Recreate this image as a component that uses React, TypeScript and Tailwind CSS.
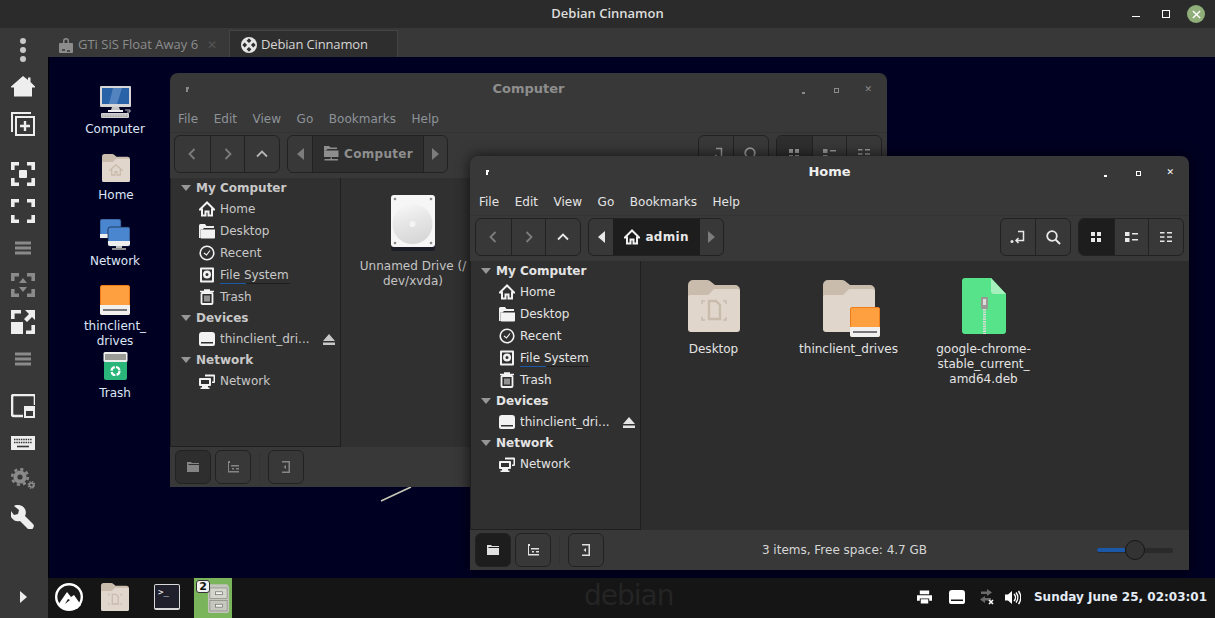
import type { ReactNode } from 'react'

function Folder({ children, className }: { children?: ReactNode; className?: string }) {
  return (
    <svg viewBox="0 0 52 52" className={className}>
      <path d="M0 5a5 5 0 0 1 5-5h14a5 5 0 0 1 3 1l5 4h20a5 5 0 0 1 5 5v20H0z" fill="#c9bcad" />
      <path d="M0 17a2 2 0 0 1 2-2h18l6-6h23a3 3 0 0 1 3 3v37a3 3 0 0 1-3 3H3a3 3 0 0 1-3-3z" fill="#e0d6cb" />
      {children}
    </svg>
  )
}

function DesktopGlyph() {
  return (
    <g fill="none" stroke="#c9bcad">
      <path d="M14 24v-3h3M35 21h3v3M38 37v3h-3M17 40h-3v-3" strokeWidth="1.5" />
      <path d="M21 21h7l4 4v14H21z" strokeWidth="2.4" />
    </g>
  )
}

function HomeGlyph() {
  return <path d="M26 20l-11 10h3v9h6v-6h4v6h6v-9h3z" fill="none" stroke="#c9bcad" strokeWidth="2.4" />
}

function OrangeDrive({ className }: { className?: string }) {
  return (
    <svg viewBox="0 0 30 30" className={className}>
      <rect x="0.5" y="0.5" width="29" height="29" rx="1.5" fill="#ffa040" stroke="#ef7d1a" />
      <path d="M0 20h30v8a2 2 0 0 1-2 2H2a2 2 0 0 1-2-2z" fill="#f2f0ee" />
      <rect x="3" y="24" width="24" height="2" fill="#77767b" />
    </svg>
  )
}

function ZipFile({ className }: { className?: string }) {
  return (
    <svg viewBox="0 0 44 56" className={className}>
      <path d="M3 0h26l15 16v37a3 3 0 0 1-3 3H3a3 3 0 0 1-3-3V3a3 3 0 0 1 3-3z" fill="#57e389" />
      <path d="M29 0l15 16H32a3 3 0 0 1-3-3z" fill="#a6f0bd" />
      <rect x="19" y="19" width="7" height="12" rx="1" fill="#9a9996" />
      <rect x="21" y="21" width="3" height="6" fill="#deddda" />
      <path d="M22.5 31v25" stroke="#deddda" strokeWidth="3" strokeDasharray="1.4 1" />
    </svg>
  )
}

function HardDisk({ className }: { className?: string }) {
  return (
    <svg viewBox="0 0 44 56" className={className}>
      <defs>
        <linearGradient id="platter" x1="0.3" y1="0" x2="0.6" y2="1">
          <stop offset="0" stopColor="#f6f6f6" />
          <stop offset="0.45" stopColor="#e6e6e6" />
          <stop offset="1" stopColor="#d6d6d6" />
        </linearGradient>
      </defs>
      <rect x="0" y="3" width="44" height="53" rx="3" fill="#1c1c28" />
      <rect x="0" y="0" width="44" height="52" rx="3" fill="#f6f6f6" />
      <circle cx="21.500" cy="29" r="20" fill="url(#platter)" />
      <circle cx="21.500" cy="29" r="3" fill="#f4f4f4" />
      <g fill="#8a8a8a">
        <circle cx="4" cy="4" r="1.3" />
        <circle cx="40" cy="4" r="1.3" />
        <circle cx="4" cy="48" r="1.3" />
        <circle cx="40" cy="48" r="1.3" />
      </g>
    </svg>
  )
}

function ComputerIcon({ className }: { className?: string }) {
  return (
    <svg viewBox="0 0 33 33" className={className}>
      <rect x="1" y="0" width="31" height="21" rx="1" fill="#d6d6d6" />
      <rect x="3" y="2" width="27" height="16" fill="#2a62a8" />
      <path d="M14 2h9l-5 16h-8z" fill="#6f9bd0" opacity="0.6" />
      <path d="M13 21h7l1 3h-9z" fill="#c4c4c4" />
      <rect x="9" y="24" width="15" height="2" fill="#eeeeee" />
      <rect x="2" y="27" width="28" height="5" rx="1" fill="#cfcfcf" />
      <path d="M3 29h26M3 30.5h26" stroke="#8c8c8c" strokeWidth="0.7" strokeDasharray="1 0.6" />
      <path d="M26 24h5v2h-3" fill="none" stroke="#bbbbbb" />
    </svg>
  )
}

function NetworkIcon({ className }: { className?: string }) {
  return (
    <svg viewBox="0 0 30 31" className={className}>
      <rect x="0" y="0" width="21" height="19" rx="2" fill="#4a86cf" stroke="#1c2a48" strokeWidth="0.6" />
      <rect x="0" y="15" width="21" height="4" fill="#eeeeee" />
      <rect x="8" y="8" width="22" height="19" rx="2" fill="#4a86cf" stroke="#1c2a48" strokeWidth="0.8" />
      <path d="M8 22h22v3a2 2 0 0 1-2 2H10a2 2 0 0 1-2-2z" fill="#eeeeee" />
      <rect x="16" y="27" width="6" height="2" fill="#bdbdbd" />
      <rect x="12" y="29" width="14" height="2" fill="#8f8f8f" />
    </svg>
  )
}

function TrashIcon({ className }: { className?: string }) {
  return (
    <svg viewBox="0 0 25 28" className={className}>
      <rect x="0.5" y="0" width="24" height="10" rx="1.5" fill="#eeeeee" />
      <rect x="2" y="2" width="21" height="6" fill="#9a9a96" />
      <path d="M1 10h23v16a2 2 0 0 1-2 2H3a2 2 0 0 1-2-2z" fill="#2ab57a" />
      <circle cx="12.5" cy="19" r="4" fill="none" stroke="#ffffff" strokeWidth="2.2" strokeDasharray="5 1.3" />
    </svg>
  )
}

function CabinetIcon({ className }: { className?: string }) {
  return (
    <svg viewBox="0 0 24 30" className={className}>
      <path d="M3 0h18l2 3v25a2 2 0 0 1-2 2H3a2 2 0 0 1-2-2V3z" fill="#c4c5bc" />
      <rect x="3" y="4" width="18" height="11" fill="#d4d5cc" stroke="#84857d" strokeWidth="0.7" />
      <rect x="3" y="17" width="18" height="11" fill="#c6c7be" stroke="#84857d" strokeWidth="0.7" />
      <rect x="9" y="8" width="7" height="3" fill="#f2f2ee" stroke="#6a6b64" strokeWidth="0.7" />
      <rect x="9" y="21" width="7" height="3" fill="#f2f2ee" stroke="#6a6b64" strokeWidth="0.7" />
    </svg>
  )
}

function ToolIcon({ name }: { name: string }) {
  const frame = 'M1.800 8V1.800H8M16 1.800h6.200V8M22.200 16v6.200H16M8 22.200H1.800V16'
  const paths: Record<string, ReactNode> = {
    dots: (
      <g fill="currentColor">
        <circle cx="12" cy="3" r="3" />
        <circle cx="12" cy="12" r="3" />
        <circle cx="12" cy="21" r="3" />
      </g>
    ),
    home: <path d="M12 1l5 4V2.500h2.500V7l4.500 4.500v1h-3v9H3v-9H0v-1z" fill="currentColor" />,
    clone: (
      <g fill="none" stroke="currentColor" strokeWidth="2">
        <path d="M1 20V1h19" />
        <rect x="5" y="5" width="18" height="18" />
        <path d="M14 9v10M9 14h10" strokeWidth="2.400" />
      </g>
    ),
    target: (
      <g>
        <path d={frame} fill="none" stroke="currentColor" strokeWidth="3.600" />
        <rect x="8" y="8" width="8" height="8" rx="1" fill="currentColor" />
      </g>
    ),
    corners: <path d={frame} fill="none" stroke="currentColor" strokeWidth="3.600" />,
    lines: <path d="M4 7h16M4 12h16M4 17h16" stroke="currentColor" strokeWidth="3" />,
    updown: (
      <g>
        <path d={frame} fill="none" stroke="currentColor" strokeWidth="3.600" />
        <path d="M12 5l4 5H8zM12 19l-4-5h8z" fill="currentColor" />
      </g>
    ),
    expand: (
      <g>
        <rect x="0" y="12" width="12" height="12" fill="currentColor" />
        <path d="M1.800 9V1.800H10M22.200 15v7.200H15" fill="none" stroke="currentColor" strokeWidth="3.600" />
        <path d="M14 0h10v10l-3-3-5 5-3-3 5-5z" fill="currentColor" />
      </g>
    ),
    pip: (
      <g>
        <path d="M12 22H3a2 2 0 0 1-2-2V3a2 2 0 0 1 2-2h19a2 2 0 0 1 2 2v8" fill="none" stroke="currentColor" strokeWidth="2.600" />
        <rect x="13" y="12" width="11" height="12" fill="currentColor" />
        <rect x="15" y="17" width="7" height="5" fill="#383838" />
      </g>
    ),
    keyboard: (
      <g transform="translate(0 5)">
        <rect x="0" y="0" width="24" height="14" fill="currentColor" />
        <path d="M3 3.500h18M3 6.500h18" stroke="#383838" strokeWidth="1.600" strokeDasharray="1.500 0.800" />
        <path d="M6 10.500h12" stroke="#383838" strokeWidth="1.600" />
      </g>
    ),
    gears: (
      <g fill="none" stroke="currentColor">
        <circle cx="9" cy="9" r="7.800" strokeWidth="2.600" strokeDasharray="3.100 3.030" />
        <circle cx="9" cy="9" r="4.600" strokeWidth="4" />
        <circle cx="20.500" cy="17" r="3.200" strokeWidth="1.400" strokeDasharray="1.500 1" />
        <circle cx="20.500" cy="17" r="2" strokeWidth="1.600" />
      </g>
    ),
    wrench: <path d="M8 0a7 7 0 0 0-5 1l5 4-1 4-4 1-3-4a7.500 7.500 0 0 0 9 10l8 8a3 3 0 0 0 4.500 0l.5-1a3 3 0 0 0 0-4l-8-8A7.500 7.500 0 0 0 8 0z" fill="currentColor" />,
  }
  return (
    <svg viewBox="0 0 24 24" className="w-6 h-6">
      {paths[name]}
    </svg>
  )
}

function ToolRow({ name, tone = 'text-[#eeeeee]' }: { name: string; tone?: string }) {
  return (
    <div className={`h-[37px] w-full flex items-center justify-center shrink-0 ${tone}`}>
      <ToolIcon name={name} />
    </div>
  )
}

function LeftToolbar() {
  const dim = 'text-[#8a8a8a]'
  return (
    <div className="w-[48px] shrink-0 bg-[#383838] flex flex-col items-center pt-[3px] pb-[3px] pr-[2px]">
      <ToolRow name="dots" tone="text-[#c8c8c8]" />
      <ToolRow name="home" />
      <ToolRow name="clone" />
      <div className="h-[13px] shrink-0" />
      <ToolRow name="target" />
      <ToolRow name="corners" />
      <ToolRow name="lines" tone={dim} />
      <ToolRow name="updown" tone={dim} />
      <ToolRow name="expand" />
      <ToolRow name="lines" tone={dim} />
      <div className="h-[10px] shrink-0" />
      <ToolRow name="pip" />
      <ToolRow name="keyboard" />
      <ToolRow name="gears" tone={dim} />
      <ToolRow name="wrench" />
      <div className="mt-auto h-[36px] flex items-center">
        <svg viewBox="0 0 7 12" className="w-[7px] h-3 text-[#eeeeee]">
          <path d="M0 0l7 6-7 6z" fill="currentColor" />
        </svg>
      </div>
    </div>
  )
}

function TabBar() {
  return (
    <div className="h-[29px] shrink-0 bg-[#383838] flex items-end font-['Open_Sans',sans-serif] text-[13px]">
      <div className="w-[181px] h-[27px] flex items-center pl-[11px] pt-[2px] text-[#8c8c8c]">
        <svg viewBox="0 0 14 16" className="w-[14px] h-4">
          <path d="M4 6V4a3 3 0 0 1 6 0v2h3a1 1 0 0 1 1 1v8a1 1 0 0 1-1 1H1a1 1 0 0 1-1-1V7a1 1 0 0 1 1-1zm1.500 0h3V4a1.500 1.500 0 0 0-3 0z" fill="#8c8c8c" fillRule="evenodd" />
          <path d="M3 13h3M8 14h3" stroke="#383838" strokeWidth="1.500" />
        </svg>
        <span className="ml-[5px] whitespace-nowrap">GTi SiS Float Away 6</span>
        <span className="ml-[9px] text-[#555555] text-[12px]">✕</span>
      </div>
      <div className="w-[169px] h-[27px] flex items-center pl-[11px] pt-[2px] bg-[#2e2e2e] border border-b-0 border-[#444444] text-[#d6d6d6]">
        <svg viewBox="0 0 16 16" className="w-4 h-4">
          <circle cx="8" cy="8" r="8" fill="#e6e6e6" />
          <g fill="#2e2e2e">
            <rect x="6.300" y="2" width="3.400" height="3.400" transform="rotate(45 8 3.700)" />
            <rect x="6.300" y="10.600" width="3.400" height="3.400" transform="rotate(45 8 12.300)" />
            <rect x="2" y="6.300" width="3.400" height="3.400" transform="rotate(45 3.700 8)" />
            <rect x="10.600" y="6.300" width="3.400" height="3.400" transform="rotate(45 12.300 8)" />
          </g>
        </svg>
        <span className="ml-[4px] whitespace-nowrap tracking-[-0.15px]">Debian Cinnamon</span>
      </div>
    </div>
  )
}

function SideIcon({ name, className }: { name: string; className?: string }) {
  const c = 'currentColor'
  const icons: Record<string, ReactNode> = {
    home: <path d="M8 1.500L.8 8.500h2.200v6h3.500v-4h3v4H13v-6h2.200z" fill="none" stroke={c} strokeWidth="2" />,
    desktop: (
      <g fill={c}>
        <path d="M0 2.500A1.500 1.500 0 0 1 1.500 1H6l1.500 2H15v2H5L3.500 6.500 1.500 6.500V15H0z" />
        <path d="M1.500 6.500H16v8a1 1 0 0 1-1 1H2.500a1 1 0 0 1-1-1z" />
      </g>
    ),
    recent: (
      <g fill="none" stroke={c} strokeWidth="1.600">
        <circle cx="8" cy="8" r="6.800" />
        <path d="M5 8l2.500 2L11 5.500" strokeWidth="1.200" />
      </g>
    ),
    fs: (
      <g>
        <path fillRule="evenodd" d="M2 .5h12a1 1 0 0 1 1 1v13a1 1 0 0 1-1 1H2a1 1 0 0 1-1-1v-13a1 1 0 0 1 1-1zm1 2v11h10v-11z" fill={c} />
        <path fillRule="evenodd" d="M8 3.500a4 4 0 1 1 0 8 4 4 0 0 1 0-8zm0 2.500a1.500 1.500 0 1 0 0 3 1.500 1.500 0 0 0 0-3z" fill={c} />
      </g>
    ),
    trash: (
      <g fill="none" stroke={c}>
        <path d="M1 2.500h14M5 1h6" strokeWidth="1.500" />
        <rect x="2.500" y="4" width="11" height="11" rx="1" strokeWidth="1.800" />
        <path d="M6 6.500v6M8 6.500v6M10 6.500v6" strokeWidth="1" />
      </g>
    ),
    drive: (
      <g>
        <path fillRule="evenodd" d="M3 1h10a3 3 0 0 1 3 3v9a2 2 0 0 1-2 2H2a2 2 0 0 1-2-2V4a3 3 0 0 1 3-3zM2 11v1.500h12V11z" fill={c} />
      </g>
    ),
    network: (
      <g fill={c}>
        <path fillRule="evenodd" d="M1 5h10a1 1 0 0 1 1 1v6a1 1 0 0 1-1 1H1a1 1 0 0 1-1-1V6a1 1 0 0 1 1-1zm1 2v4h8V7z" />
        <path d="M3 13h6v1.500h1.500V16h-9v-1.500H3z" />
        <path d="M6 1.500h9a1 1 0 0 1 1 1V9a1 1 0 0 1-1 1h-2V8.500h1.500V3.500H6z" />
      </g>
    ),
    computer: (
      <g fill={c}>
        <path d="M1 0h5l1.500 1.500H14V3H4.500L3 4.500H1z" />
        <path d="M1 4.500h14.500V11H1z" />
        <path d="M7.500 11.500h1.500V13h6v1.500H1.500V13h6z" />
      </g>
    ),
  }
  return (
    <svg viewBox="0 0 16 16" className={`w-4 h-4 shrink-0 ${className ?? 'text-[#f2f2f2]'}`}>
      {icons[name]}
    </svg>
  )
}

function SideHeader({ label }: { label: string }) {
  return (
    <div className="h-[20px] flex items-center pl-[10px] font-bold">
      <svg viewBox="0 0 10 6" className="w-[10px] h-[6px] text-[#969696]">
        <path d="M0 0h10L5 6z" fill="currentColor" />
      </svg>
      <span className="ml-[5px]">{label}</span>
    </div>
  )
}

function SideItem({ icon, label, children }: { icon: string; label: string; children?: ReactNode }) {
  return (
    <div className="h-[22px] flex items-center pl-[28px] relative">
      <SideIcon name={icon} />
      <span className="ml-[5px] whitespace-nowrap">{label}</span>
      {children}
    </div>
  )
}

function Sidebar({ active }: { active: boolean }) {
  return (
    <div className={`w-[171px] shrink-0 border border-t-0 border-[#1f1f1f] bg-[#303030] text-[12px] ${active ? 'text-[#e4e4e4]' : 'text-[#c8c8c8]'}`}>
      <SideHeader label="My Computer" />
      <SideItem icon="home" label="Home" />
      <SideItem icon="desktop" label="Desktop" />
      <SideItem icon="recent" label="Recent" />
      <SideItem icon="fs" label="File System">
        <div className="absolute left-[49px] top-[19px] w-[70px] h-[1px] bg-[#1e1e1e]">
          <div className="w-[26px] h-[1px] bg-[#1c58a8]" />
        </div>
      </SideItem>
      <SideItem icon="trash" label="Trash" />
      <SideHeader label="Devices" />
      <SideItem icon="drive" label="thinclient_dri...">
        <svg viewBox="0 0 12 11" className="absolute left-[152px] top-[6px] w-3 h-[11px]">
          <path d="M6 0l6 7H0zM0 8.500h12V11H0z" fill="currentColor" />
        </svg>
      </SideItem>
      <SideHeader label="Network" />
      <SideItem icon="network" label="Network" />
    </div>
  )
}

function Chevron({ d, tone }: { d: string; tone: string }) {
  return (
    <svg viewBox="0 0 16 16" className={`w-4 h-4 ${tone}`}>
      <path d={d} fill="none" stroke="currentColor" strokeWidth="1.800" />
    </svg>
  )
}

function Glyph({ name, active }: { name: string; active: boolean }) {
  const icons: Record<string, ReactNode> = {
    terminal: (
      <g>
        <circle cx="2" cy="12.500" r="1.500" fill="currentColor" />
        <path d="M8 2.500h5.500v9H6M8.500 9L6 11.500 8.500 14" fill="none" stroke="currentColor" strokeWidth="1.500" />
      </g>
    ),
    search: (
      <g fill="none" stroke="currentColor">
        <circle cx="7" cy="7" r="4.800" strokeWidth="1.800" />
        <path d="M10.500 10.500L15 15" strokeWidth="2" />
      </g>
    ),
    grid: <path d="M3 3h4v4H3zM9 3h4v4H9zM3 9h4v4H3zM9 9h4v4H9z" fill="currentColor" />,
    list: <path d="M2 3h4.500v4H2zM2 9h4.500v4H2zM9 4h6v1.500H9zM9 10h6v1.500H9z" fill="currentColor" />,
    compact: <path d="M2 3h4.500v1.500H2zM2 7.300h4.500v1.500H2zM2 11.500h4.500V13H2zM9 3h5v1.500H9zM9 7.300h5v1.500H9zM9 11.500h5V13H9z" fill="currentColor" />,
  }
  return (
    <svg viewBox="0 0 16 16" className={`w-4 h-4 ${active ? 'text-[#e8e8e8]' : 'text-[#9a9a9a]'}`}>
      {icons[name]}
    </svg>
  )
}

function WindowToolbar({ active, location }: { active: boolean; location: ReactNode }) {
  const group = 'flex h-[38px] rounded-[6px] border border-[#222222] overflow-hidden bg-[#383838]'
  const cell = 'w-[34.7px] flex items-center justify-center border-l border-[#222222] first:border-l-0'
  const dim = 'text-[#7c7c7c]'
  return (
    <div className={`h-[45px] shrink-0 flex items-start pt-[2px] pr-[5px] ${active ? 'pl-[5px]' : 'pl-[4px]'}`}>
      <div className={group}>
        <div className={cell}><Chevron d="M10.500 3l-5 5 5 5" tone={dim} /></div>
        <div className={cell}><Chevron d="M5.500 3l5 5-5 5" tone={dim} /></div>
        <div className={cell}><Chevron d="M3 10.500l5-5 5 5" tone={active ? 'text-[#e8e8e8]' : 'text-[#b4b4b4]'} /></div>
      </div>
      <div className={`${group} ml-[7px]`}>
        <div className="w-[24px] flex items-center justify-center">
          <svg viewBox="0 0 7 12" className={`w-[7px] h-3 ${active ? 'text-[#e8e8e8]' : dim}`}>
            <path d="M7 0L0 6l7 6z" fill="currentColor" />
          </svg>
        </div>
        {location}
        <div className="w-[23px] flex items-center justify-center">
          <svg viewBox="0 0 7 12" className={`w-[7px] h-3 ${dim}`}>
            <path d="M0 0l7 6-7 6z" fill="currentColor" />
          </svg>
        </div>
      </div>
      <div className={`${group} ml-auto`}>
        <div className={cell}><Glyph name="terminal" active={active} /></div>
        <div className={cell}><Glyph name="search" active={active} /></div>
      </div>
      <div className={`${group} ml-[7px]`}>
        <div className={`${cell} ${active ? 'bg-[#1d1d1d]' : 'bg-[#2e2e2e]'}`}><Glyph name="grid" active={active} /></div>
        <div className={cell}><Glyph name="list" active={active} /></div>
        <div className={cell}><Glyph name="compact" active={active} /></div>
      </div>
    </div>
  )
}

function StatusBar({ active }: { active: boolean }) {
  const btn = 'w-[36px] h-[34px] rounded-[6px] border border-[#222222] flex items-center justify-center'
  const tone = active ? 'text-[#e0e0e0]' : 'text-[#858585]'
  return (
    <div className={`h-[40px] shrink-0 bg-[#383838] flex items-center pl-[5px] pr-[16px] ${tone}`}>
      <div className={`${btn} ${active ? 'bg-[#1d1d1d]' : 'bg-[#2e2e2e]'}`}>
        <svg viewBox="0 0 12 10" className="w-3 h-[10px]"><path d="M0 0h4l1 1h7v1H1.500v1H12v7H0z" fill="currentColor" /></svg>
      </div>
      <div className={`${btn} ml-[4px]`}>
        <svg viewBox="0 0 12 12" className="w-3 h-3"><path d="M1 0h2v2H2v8h10v1.500H1zM4 4h8v1.500H4zM5 7h2v1.500H5zM9 7h3v1.500H9z" fill="currentColor" /></svg>
      </div>
      <div className="w-px h-[30px] ml-[8px] bg-[#333333]" />
      <div className={`${btn} ml-[8px]`}>
        <svg viewBox="0 0 8 12" className="w-2 h-3"><path d="M0 0h8v12H0v-1.500h6.500v-9H0zM4 4v4L1.500 6z" fill="currentColor" /></svg>
      </div>
      {active && (
        <>
          <div className="flex-1 text-center pr-[12px] text-[#d6d6d6]">3 items, Free space: 4.7 GB</div>
          <div className="relative w-[76px] h-[5px] rounded-full bg-[#2a2a2a]">
            <div className="h-[4px] w-[28px] rounded-l-full bg-[#1c58a8]" />
            <div className="absolute left-[28px] top-[-8px] w-[20px] h-[20px] rounded-full bg-[#333333] border border-[#161616]" />
          </div>
        </>
      )}
    </div>
  )
}

function TitleBar({ title, active }: { title: string; active: boolean }) {
  const c = active ? 'bg-white' : 'bg-[#8a8a8a]'
  return (
    <div className="h-[32px] shrink-0 relative flex items-center justify-center">
      <div className={`absolute left-[16px] top-[14px] w-[2px] h-[5px] ${c}`} />
      <div className={`absolute left-[18px] top-[14px] w-[1px] h-[2px] ${c}`} />
      <span className={`font-bold text-[13px] ${active ? 'text-[#eeeeee]' : 'text-[#8e8e8e]'}`}>{title}</span>
      <div className={`absolute right-[82px] top-[19px] w-[3px] h-[2px] ${c}`} />
      <div className={`absolute right-[48px] top-[15px] w-[5px] h-[5px] border-[1.5px] ${active ? 'border-white' : 'border-[#8a8a8a]'}`} />
      <span className={`absolute right-[15px] top-[10px] text-[9px] font-bold ${active ? 'text-white' : 'text-[#8a8a8a]'}`}>✕</span>
    </div>
  )
}

function FileWindow({ title, active, location, children, className }: { title: string; active: boolean; location: ReactNode; children: ReactNode; className: string }) {
  return (
    <div className={`absolute h-[414px] rounded-t-[8px] overflow-hidden flex flex-col bg-[#383838] text-[12px] ${className}`}>
      <TitleBar title={title} active={active} />
      <div className={`h-[28px] shrink-0 flex items-center gap-[15.6px] border-b border-[#333333] ${active ? 'pl-[9px] text-[#e4e4e4]' : 'pl-[8px] text-[#8d9398]'}`}>
        <span>File</span>
        <span>Edit</span>
        <span>View</span>
        <span>Go</span>
        <span>Bookmarks</span>
        <span>Help</span>
      </div>
      <WindowToolbar active={active} location={location} />
      <div className="flex-1 flex min-h-0">
        <Sidebar active={active} />
        {children}
      </div>
      <StatusBar active={active} />
    </div>
  )
}

function DesktopIcon({ label, className, children }: { label: ReactNode; className: string; children: ReactNode }) {
  return (
    <div className={`absolute w-[100px] flex flex-col items-center text-[12px] leading-[15px] text-[#dde6f5] text-center ${className}`}>
      {children}
      <span>{label}</span>
    </div>
  )
}

function TrayIcons() {
  return (
    <div className="flex items-center text-white">
      <svg viewBox="0 0 16 14" className="w-[15px] h-[14px]">
        <path d="M3 0h10v4H3zM0 5h16v6h-3V8.500H3V11H0zM4 9.500h8V14H4z" fill="currentColor" />
      </svg>
      <svg viewBox="0 0 16 14" className="w-[16px] h-[14px] ml-[17px]">
        <path fillRule="evenodd" d="M3 0h10a3 3 0 0 1 3 3v9a2 2 0 0 1-2 2H2a2 2 0 0 1-2-2V3a3 3 0 0 1 3-3zM2 9.500V11h12V9.500z" fill="currentColor" />
      </svg>
      <svg viewBox="0 0 16 16" className="w-4 h-4 ml-[13px]">
        <path d="M9 0l5 3.500L9 7V5H3V2.500h6zM7 7v2h6v2.500H7V14L2 10.500z" fill="#6a6a6a" />
        <path d="M11 11l4 4M15 11l-4 4" stroke="#ffffff" strokeWidth="1.600" />
      </svg>
      <svg viewBox="0 0 16 15" className="w-4 h-[15px] ml-[11px]">
        <path d="M0 4.500h3L7 1v13L3 10.500H0z" fill="currentColor" />
        <path d="M9 4a5 5 0 0 1 0 7M11 2.500a8 8 0 0 1 0 10M13.500 1a11 11 0 0 1 0 13" fill="none" stroke="currentColor" strokeWidth="1.500" />
      </svg>
    </div>
  )
}

function Panel() {
  return (
    <div className="h-[40px] shrink-0 bg-[#151515] flex items-center relative overflow-hidden pb-[2px]">
      <svg viewBox="0 0 28 28" className="w-[28px] h-[28px] ml-[7px]">
        <circle cx="14" cy="14" r="12.800" fill="#1a1a1a" stroke="#ffffff" strokeWidth="2.400" />
        <path d="M3 22L12 9l4 5 3-2 7 10-4 4H8z" fill="#ffffff" />
        <path d="M13 16l-3 5 5-4z" fill="#1a1a1a" />
      </svg>
      <Folder className="w-[28px] h-[28px] ml-[18px]">
        <DesktopGlyph />
      </Folder>
      <div className="w-[26px] h-[26px] ml-[25px] rounded-[2px] border border-[#d8d8d8] border-b-[2px] bg-[#201f2c] text-white font-['DejaVu_Sans_Mono',monospace] text-[9px] leading-[12px] pl-[3px] pt-[1px]">
        &gt;_
      </div>
      <div className="w-[38px] h-[40px] self-start ml-[14px] bg-[#7ab55c] relative flex items-center justify-center">
        <CabinetIcon className="w-[23px] h-[29px] ml-[11px]" />
        <span className="absolute left-[2px] top-[2px] w-[14px] h-[13px] rounded-[3px] bg-[#f2f2f2] border border-[#333333] text-[#111111] font-bold text-[11px] leading-[11px] text-center">2</span>
      </div>
      <span className="absolute left-[536px] top-[-2px] text-[28px] leading-[40px] text-[#242424] tracking-[-1px]">debian</span>
      <div className="ml-auto flex items-center pr-[8px]">
        <TrayIcons />
        <span className="ml-[13px] font-bold text-[12px] text-[#e4ecf4] whitespace-nowrap">Sunday June 25, 02:03:01</span>
      </div>
    </div>
  )
}

export default function App() {
  return (
    <div className="w-[1215px] h-[618px] overflow-hidden flex flex-col bg-[#2b2b2b] font-['DejaVu_Sans',sans-serif]">
      <div className="h-[28px] shrink-0 relative flex items-center justify-center text-[13px] text-[#dddddd] font-['Open_Sans',sans-serif] font-semibold">
        <span>Debian Cinnamon</span>
        <div className="absolute right-[75px] top-[16px] w-[8px] h-[1px] bg-white" />
        <div className="absolute right-[45px] top-[10px] w-[8px] h-[8px] border border-white" />
        <div className="absolute right-[10px] top-[5px] w-[18px] h-[18px] rounded-full bg-[#8fae7a] flex items-center justify-center">
          <svg viewBox="0 0 10 10" className="w-[9px] h-[9px]">
            <path d="M1 1l8 8M9 1l-8 8" stroke="white" strokeWidth="1.500" />
          </svg>
        </div>
      </div>
      <div className="flex-1 flex min-h-0">
        <LeftToolbar />
        <div className="flex-1 flex flex-col min-w-0">
          <TabBar />
          <div className="flex-1 relative bg-[#000022] overflow-hidden border-l border-[#000000]">
            <svg viewBox="0 0 32 16" className="absolute left-[331px] top-[429px] w-[32px] h-[16px]">
              <path d="M1 15L31 1" stroke="#c8c8b8" strokeWidth="1.600" />
            </svg>

            <DesktopIcon label="Computer" className="left-[16px] top-[29px]">
              <ComputerIcon className="w-[33px] h-[33px] mb-[3px]" />
            </DesktopIcon>
            <DesktopIcon label="Home" className="left-[17px] top-[97px]">
              <Folder className="w-[28px] h-[28px] mb-[6px]">
                <HomeGlyph />
              </Folder>
            </DesktopIcon>
            <DesktopIcon label="Network" className="left-[16px] top-[162px]">
              <NetworkIcon className="w-[30px] h-[31px] mb-[4px]" />
            </DesktopIcon>
            <DesktopIcon label={<>thinclient_<br />drives</>} className="left-[16px] top-[228px]">
              <OrangeDrive className="w-[30px] h-[30px] mb-[4px]" />
            </DesktopIcon>
            <DesktopIcon label="Trash" className="left-[16px] top-[295px]">
              <TrashIcon className="w-[25px] h-[28px] mb-[6px]" />
            </DesktopIcon>

            <FileWindow
              title="Computer"
              active={false}
              className="left-[121px] top-[16px] w-[717px]"
              location={
                <div className="w-[112px] flex items-center justify-center gap-[5px] bg-[#2e2e2e] border-x border-[#222222] text-[#8e8e8e] font-bold tracking-[0.3px]">
                  <SideIcon name="computer" className="text-[#8e8e8e]" />
                  <span>Computer</span>
                </div>
              }
            >
              <div className="flex-1 bg-[#303030] pt-[17px] pl-[17px]">
                <div className="w-[110px] flex flex-col items-center text-center text-[#c4c4c4] leading-[15px]">
                  <HardDisk className="w-[44px] h-[56px] mb-[8px]" />
                  <span>Unnamed Drive (/<br />dev/xvda)</span>
                </div>
              </div>
            </FileWindow>

            <FileWindow
              title="Home"
              active
              className="left-[421px] top-[99px] w-[719px] shadow-[0_0_14px_rgba(0,0,0,0.7)]"
              location={
                <div className="w-[87px] flex items-center justify-center gap-[5px] bg-[#1d1d1d] text-[#e8e8e8] font-bold tracking-[0.3px]">
                  <SideIcon name="home" />
                  <span>admin</span>
                </div>
              }
            >
              <div className="flex-1 bg-[#2d2d2d] relative flex text-[#e4e4e4] leading-[15px] text-center pl-[5px] pt-[17px]">
                <div className="w-[135px] flex flex-col items-center pt-[2px]">
                  <Folder className="w-[52px] h-[52px] mb-[10px]">
                    <DesktopGlyph />
                  </Folder>
                  <span>Desktop</span>
                </div>
                <div className="w-[135px] flex flex-col items-center pt-[2px]">
                  <div className="relative w-[52px] h-[52px] mb-[10px]">
                    <Folder className="w-[52px] h-[52px]" />
                    <OrangeDrive className="absolute left-[27px] top-[27px] w-[30px] h-[30px]" />
                  </div>
                  <span>thinclient_drives</span>
                </div>
                <div className="w-[135px] flex flex-col items-center">
                  <ZipFile className="w-[44px] h-[56px] mb-[8px]" />
                  <span>google-chrome-<br />stable_current_<br />amd64.deb</span>
                </div>
              </div>
            </FileWindow>
          </div>
          <Panel />
        </div>
      </div>
    </div>
  )
}
